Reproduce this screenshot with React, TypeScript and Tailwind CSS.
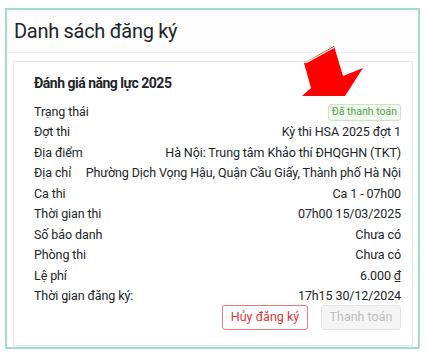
const rows: { label: string; value: string }[] = [
  { label: "Đợt thi", value: "Kỳ thi HSA 2025 đợt 1" },
  { label: "Địa điểm", value: "Hà Nội: Trung tâm Khảo thí ĐHQGHN (TKT)" },
  { label: "Địa chỉ", value: "Phường Dịch Vọng Hậu, Quận Cầu Giấy, Thành phố Hà Nội" },
  { label: "Ca thi", value: "Ca 1 - 07h00" },
  { label: "Thời gian thi", value: "07h00 15/03/2025" },
  { label: "Số báo danh", value: "Chưa có" },
  { label: "Phòng thi", value: "Chưa có" },
  { label: "Lệ phí", value: "6.000 ₫" },
  { label: "Thời gian đăng ký:", value: "17h15 30/12/2024" },
];

function RedArrow() {
  return (
    <svg
      className="absolute left-[300px] top-[44px]"
      width="66"
      height="56"
      viewBox="300 44 66 56"
    >
      <polygon
        points="304,63 334,46 343,76 363,68 345,96 302,96 311,88"
        fill="#ff0000"
      />
      <line x1="305" y1="60" x2="333" y2="44" stroke="#fff" strokeWidth="1.2" />
      <line x1="305.5" y1="63" x2="334" y2="47.5" stroke="#fff" strokeWidth="1.2" />
    </svg>
  );
}

export default function App() {
  return (
    <div
      className="relative w-[426px] h-[355px] bg-white pt-[8px] pl-[5px] text-[#212529]"
      style={{ fontFamily: 'Roboto, "Noto Sans", sans-serif' }}
    >
      <div className="w-[415px] h-[341px] border-2 border-[#a6dcc6] flex flex-col">
        <div className="h-[43px] border-b border-[#eeeeee] bg-[#fdfdfd] flex items-center pl-[7px]">
          <h1 className="text-[20px] leading-none tracking-[-0.3px] whitespace-nowrap">Danh sách đăng ký</h1>
        </div>
        <div className="flex-1 pt-[8px] pl-[6px] pr-[5px] pb-[1px]">
          <div className="h-full border border-[#e6e6e6] pl-[20px] pr-[11px] pt-[11px]">
            <div className="text-[14px] font-bold leading-[20px] tracking-[-0.5px] whitespace-nowrap">
              Đánh giá năng lực 2025
            </div>
            <div className="mt-[9px] text-[12.5px] tracking-[-0.1px] whitespace-nowrap">
              <div className="flex items-center justify-between h-[20.5px]">
                <span>Trạng thái</span>
                <span className="text-[10.5px] leading-none tracking-normal text-[#52a447] bg-[#f2faf0] border border-[#c7e8bd] rounded-[3px] px-[3px] py-[2px]">
                  Đã thanh toán
                </span>
              </div>
              {rows.map((r) => (
                <div key={r.label} className="flex items-center justify-between h-[20.5px]">
                  <span>{r.label}</span>
                  <span>{r.value}</span>
                </div>
              ))}
            </div>
            <div className="flex justify-end gap-[13px] mt-[-2px] text-[12.5px] whitespace-nowrap">
              <button className="w-[86px] h-[25px] border border-[#e07a7f] rounded-[3px] text-[#d9363e] bg-white">
                Hủy đăng ký
              </button>
              <button className="w-[80px] h-[25px] border border-[#e4e4e4] rounded-[3px] text-[#bdbdbd] bg-[#f5f5f5]">
                Thanh toán
              </button>
            </div>
          </div>
        </div>
      </div>
      <RedArrow />
    </div>
  );
}
